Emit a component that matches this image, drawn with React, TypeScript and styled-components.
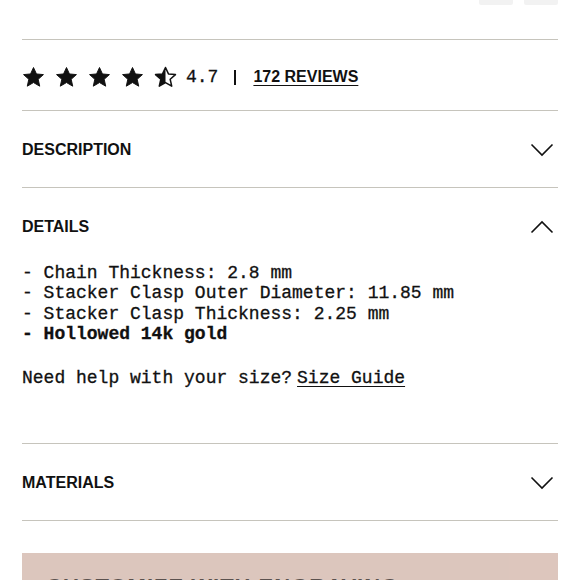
import React from "react";
import styled, { createGlobalStyle } from "styled-components";

const Global = createGlobalStyle`
  html, body { margin: 0; padding: 0; background: #ffffff; }
  body { font-family: "Liberation Sans", Arial, sans-serif; color: #111; overflow: hidden; }
`;

const Page = styled.div`
  width: 580px;
  height: 580px;
  overflow: hidden;
  padding: 0 22px;
  box-sizing: border-box;
`;

const TopRow = styled.div`
  height: 39px;
  display: flex;
  justify-content: flex-end;
  gap: 11px;
  border-bottom: 1px solid #c6c4bc;
`;

const OptionButton = styled.div`
  width: 34px;
  height: 34px;
  margin-top: -29px;
  background: #f2f2f2;
  border-radius: 2px;
`;

const RatingRow = styled.div`
  height: 71px;
  box-sizing: border-box;
  padding-top: 4px;
  display: flex;
  align-items: center;
  border-bottom: 1px solid #c6c4bc;
`;

const Stars = styled.div`
  display: flex;
  gap: 10px;
`;

const Score = styled.span`
  font-family: "Liberation Mono", "Courier New", monospace;
  font-size: 18px;
  margin-left: 9px;
  -webkit-text-stroke: 0.3px #111;
`;

const Pipe = styled.span`
  display: inline-block;
  width: 2px;
  height: 15px;
  background: #111;
  margin: 0 17px 0 16px;
`;

const ReviewsLink = styled.a`
  font-family: "Liberation Sans", Arial, sans-serif;
  font-size: 16px;
  font-weight: 700;
  color: #111;
  text-decoration: underline;
  text-underline-offset: 3px;
  text-decoration-thickness: 1px;
`;

const Section = styled.div`
  border-bottom: 1px solid #c6c4bc;
`;

const Header = styled.div<{ $open?: boolean }>`
  display: flex;
  align-items: center;
  justify-content: space-between;
  height: 20px;
  padding: 29px 0 ${(p) => (p.$open ? "26px" : "27px")};
`;

const Title = styled.span`
  font-size: 16px;
  font-weight: 700;
  color: #111;
`;

const Chevron = styled.svg`
  width: 24px;
  height: 14px;
  margin-right: 4px;
`;

const Panel = styled.div`
  padding: 0 0 55px;
  font-family: "Liberation Mono", "Courier New", monospace;
  font-size: 18px;
  line-height: 20.4px;
  color: #111;
  -webkit-text-stroke: 0.3px #111;
`;

const SpecList = styled.ul`
  list-style: none;
  margin: 0 0 23px;
  padding: 0;
`;

const SpecItem = styled.li<{ $strong?: boolean }>`
  white-space: pre;
  font-weight: ${(p) => (p.$strong ? 700 : 400)};
`;

const HelpLine = styled.p`
  margin: 0;
  white-space: pre;
`;

const GuideLink = styled.a`
  color: #111;
  margin-left: 5px;
  text-decoration: underline;
  text-underline-offset: 3px;
`;

const Banner = styled.div`
  margin-top: 32px;
  background: #d9c0b6;
  height: 60px;
  padding: 21px 24px 0;
  box-sizing: border-box;
  font-size: 22px;
  font-weight: 700;
  letter-spacing: 1px;
  color: #4a3f3b;
  opacity: 0.9;
`;

const StarIcon = ({ half = false }: { half?: boolean }) => {
  const d =
    "M12 1.6 L15.1 8.3 L22.4 9 L16.9 13.9 L18.5 21.1 L12 17.3 L5.5 21.1 L7.1 13.9 L1.6 9 L8.9 8.3 Z";
  return (
    <svg width="23" height="22" viewBox="0 0 24 23">
      <defs>
        <clipPath id="lefthalf">
          <rect x="0" y="0" width="12" height="23" />
        </clipPath>
      </defs>
      {half ? (
        <>
          <path d={d} fill="#111" clipPath="url(#lefthalf)" />
          <path d={d} fill="none" stroke="#111" strokeWidth="1.6" strokeLinejoin="round" />
        </>
      ) : (
        <path d={d} fill="#111" stroke="#111" strokeWidth="1" strokeLinejoin="round" />
      )}
    </svg>
  );
};

const ChevronIcon = ({ up = false }: { up?: boolean }) => (
  <Chevron viewBox="0 0 24 14">
    <path
      d={up ? "M1.5 12.5 L12 2 L22.5 12.5" : "M1.5 1.5 L12 12 L22.5 1.5"}
      fill="none"
      stroke="#111"
      strokeWidth="1.6"
    />
  </Chevron>
);

export default function App() {
  return (
    <Page>
      <Global />
      <TopRow>
        <OptionButton />
        <OptionButton />
      </TopRow>
      <RatingRow>
        <Stars>
          <StarIcon />
          <StarIcon />
          <StarIcon />
          <StarIcon />
          <StarIcon half />
        </Stars>
        <Score>4.7</Score>
        <Pipe />
        <ReviewsLink href="#">172 REVIEWS</ReviewsLink>
      </RatingRow>
      <Section>
        <Header>
          <Title>DESCRIPTION</Title>
          <ChevronIcon />
        </Header>
      </Section>
      <Section>
        <Header $open>
          <Title>DETAILS</Title>
          <ChevronIcon up />
        </Header>
        <Panel>
          <SpecList>
            <SpecItem>- Chain Thickness: 2.8 mm</SpecItem>
            <SpecItem>- Stacker Clasp Outer Diameter: 11.85 mm</SpecItem>
            <SpecItem>- Stacker Clasp Thickness: 2.25 mm</SpecItem>
            <SpecItem $strong>- Hollowed 14k gold</SpecItem>
          </SpecList>
          <HelpLine>
            Need help with your size?<GuideLink href="#">Size Guide</GuideLink>
          </HelpLine>
        </Panel>
      </Section>
      <Section>
        <Header>
          <Title>MATERIALS</Title>
          <ChevronIcon />
        </Header>
      </Section>
      <Banner>CUSTOMIZE WITH ENGRAVING</Banner>
    </Page>
  );
}
